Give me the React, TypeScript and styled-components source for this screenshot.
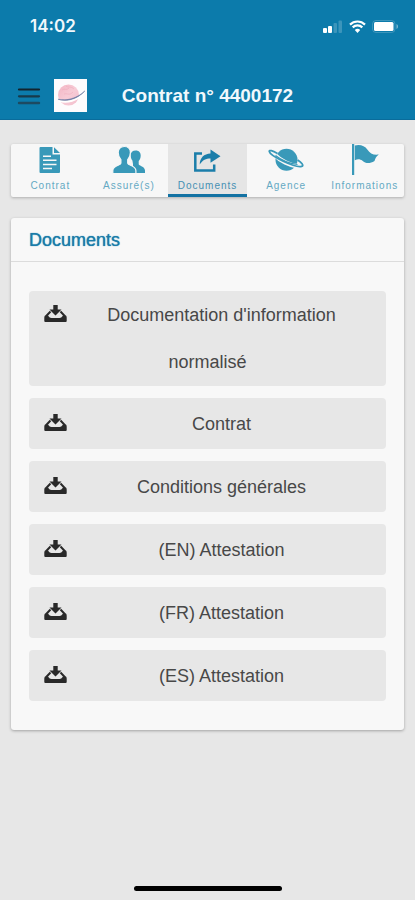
import React from "react";
import styled, { createGlobalStyle } from "styled-components";

const GlobalStyle = createGlobalStyle`
  *, *::before, *::after { box-sizing: border-box; }
  body {
    margin: 0;
    background: #e7e7e7;
    font-family: "Liberation Sans", Arial, sans-serif;
  }
  button { font: inherit; border: 0; cursor: pointer; }
  svg { display: block; flex-shrink: 0; }
`;

const Screen = styled.div`
  display: flex;
  flex-direction: column;
  min-height: 100vh;
`;

const Header = styled.header`
  background: #0c7bab;
  border-bottom: 1px solid #0a6c9b;
  color: #f1f8fc;
`;

const StatusBar = styled.div`
  display: flex;
  align-items: center;
  justify-content: space-between;
  height: 52px;
  padding: 0 16px 0 30px;
`;

const Clock = styled.time`
  font-family: Inter, sans-serif;
  font-size: 17px;
  font-weight: 600;
  line-height: 20px;
`;

const StatusIcons = styled.div`
  display: flex;
  align-items: center;
  gap: 6px;
`;

const TitleBar = styled.div`
  display: grid;
  grid-template-columns: 70px 1fr 70px;
  align-items: center;
  height: 67px;
  padding: 20px 17px 0;
`;

const Brand = styled.div`
  display: flex;
  align-items: center;
  gap: 13px;
`;

const MenuButton = styled.button`
  padding: 0;
  background: none;
`;

const Title = styled.h1`
  margin: 0;
  font-size: 19px;
  font-weight: 700;
  line-height: 24px;
  text-align: center;
  white-space: nowrap;
`;

const Main = styled.main`
  flex: 1;
  display: flex;
  flex-direction: column;
  gap: 21px;
  padding: 24px 11px;
`;

const Tabs = styled.nav`
  display: grid;
  grid-template-columns: repeat(5, 1fr);
  background: #f7f7f7;
  border-radius: 2px;
  box-shadow: 0 1px 3px rgba(0, 0, 0, 0.25);
`;

const Tab = styled.button<{ $active?: boolean }>`
  display: flex;
  flex-direction: column;
  align-items: center;
  min-width: 0;
  height: 53px;
  padding: 0;
  background: ${(p) => (p.$active ? "#e5e5e5" : "transparent")};
  border-bottom: 3px solid ${(p) => (p.$active ? "#1372a3" : "transparent")};
  color: ${(p) => (p.$active ? "#1b7eaa" : "#3999b9")};
`;

const TabLabel = styled.span<{ $active?: boolean }>`
  margin-top: 3px;
  font-size: 10px;
  line-height: 14px;
  letter-spacing: 1px;
  white-space: nowrap;
  color: ${(p) => (p.$active ? "#4590b3" : "#64a9c3")};
`;

const Card = styled.section`
  background: #f8f8f8;
  border-radius: 3px;
  box-shadow: 0 1px 3px rgba(0, 0, 0, 0.3);
`;

const CardTitle = styled.h2`
  margin: 0;
  padding: 11px 18px 10px;
  border-bottom: 1px solid #dcdcdc;
  color: #1a7ca9;
  font-size: 18px;
  font-weight: 400;
  line-height: 22px;
  text-shadow: 0 0 1px #1a7ca9;
`;

const DocumentList = styled.ul`
  display: flex;
  flex-direction: column;
  gap: 12px;
  margin: 0;
  padding: 29px 18px;
  list-style: none;
`;

const DocumentButton = styled.button`
  display: block;
  width: 100%;
  min-height: 51px;
  padding: 1px 15px 0;
  border-radius: 4px;
  background: #e7e7e7;
  color: #484848;
  font-size: 18px;
  line-height: 47px;
  text-align: center;

  svg {
    float: left;
    margin: 13px 5px 0 0;
  }
`;

const HomeIndicator = styled.div`
  align-self: center;
  width: 148px;
  height: 5px;
  margin-bottom: 9px;
  border-radius: 3px;
  background: #000;
`;

const SignalIcon = () => (
  <svg width="20" height="13" viewBox="0 0 20 13" fill="#fff" aria-hidden="true">
    <rect x="0" y="8" width="4" height="5" rx="1" />
    <rect x="5" y="6" width="4" height="7" rx="1" />
    <rect x="10.5" y="3" width="3.5" height="10" rx="1" opacity=".2" />
    <rect x="15.5" y="0.5" width="3.5" height="12.5" rx="1" opacity=".2" />
  </svg>
);

const WifiIcon = () => (
  <svg width="17" height="13" viewBox="0 0 17 13" aria-hidden="true">
    <g fill="none" stroke="#fff" strokeWidth="2.2">
      <path d="M1 4.6a10.6 10.6 0 0 1 15 0" />
      <path d="M3.7 7.4a6.8 6.8 0 0 1 9.6 0" />
    </g>
    <path d="M8.5 13 5.8 10.1a3.9 3.9 0 0 1 5.4 0z" fill="#fff" />
  </svg>
);

const BatteryIcon = () => (
  <svg width="27" height="13" viewBox="0 0 27 13" aria-hidden="true">
    <rect x=".5" y=".5" width="22.5" height="12" rx="3.5" fill="none" stroke="#fff" opacity=".2" />
    <rect x="2" y="2" width="19.5" height="9" rx="1.5" fill="#fff" />
    <path d="M24.5 4c2 .8 2 4.2 0 5z" fill="#fff" opacity=".45" />
  </svg>
);

const MenuIcon = () => (
  <svg width="24" height="18" viewBox="0 0 24 18" aria-hidden="true">
    <path d="M2 2.500h20" stroke="#12242e" strokeWidth="2.2" strokeLinecap="round" />
    <path d="M2 9.300h20" stroke="#173a4b" strokeWidth="2.2" strokeLinecap="round" />
    <path d="M2 16h20" stroke="#1d4a61" strokeWidth="2.4" strokeLinecap="round" />
  </svg>
);

const Logo = () => (
  <svg width="33" height="33" viewBox="0 0 33 33" role="img" aria-label="Logo">
    <defs>
      <linearGradient id="globe" x1="0" y1="0" x2="1" y2="1">
        <stop offset="0" stopColor="#f3b4c3" />
        <stop offset=".5" stopColor="#f7cbd6" />
        <stop offset="1" stopColor="#f3becd" />
      </linearGradient>
    </defs>
    <rect width="33" height="33" fill="#fdfbfd" />
    <circle cx="14.500" cy="16" r="10.500" fill="url(#globe)" />
    <path d="M8 11c3-2 4 1 7-2M10 15c4-1 5 2 9-2M12 7c2 2 5 0 8 3" fill="none" stroke="#eda5b8" strokeWidth="1" opacity=".5" />
    <path d="M5 21.500c8 2.500 18 0 25-7.500" fill="none" stroke="#fff" strokeWidth="2.400" />
    <path d="M4.200 20.300c8.300 1.700 18.500-.6 26.600-8.300-7.200 8.100-18.300 11.200-26.600 8.300z" fill="#5c6ea6" stroke="#6b789f" strokeWidth=".6" />
  </svg>
);

const ContractIcon = () => (
  <svg width="36" height="32" viewBox="0 1 36 32" fill="currentColor" aria-hidden="true">
    <path d="M8.500 4h12v7.500H28V29a1 1 0 0 1-1 1H8.500a1 1 0 0 1-1-1V5a1 1 0 0 1 1-1z" />
    <path d="M22 4.200 28 10h-6z" />
    <path d="M11 13.200h8M11 17.300h13.500M11 21.400h13.500M11 25.500h9" fill="none" stroke="#f7f7f7" strokeWidth="1.5" />
  </svg>
);

const PeopleIcon = () => (
  <svg width="36" height="32" viewBox="0 1 36 32" fill="currentColor" aria-hidden="true">
    <path d="M24.800 7.500c3.300 0 4.900 2.300 4.900 5 0 2.400-.8 4.400-2 5.600v3.100c0 1.400 6.300 2.200 6.300 6.300v2.500H22v-9l-.6-3.500c-1.100-1.200-1.700-3.200-1.700-5.200 0-3 1.800-4.800 5.100-4.800z" />
    <path d="M13.300 3.500c4.300 0 6.100 2.700 6.100 6.100 0 3-1.200 5.500-2.700 7v3.600c0 2.300 8.200 2.200 8.200 7.600v2.800H1.800v-2.800c0-5.400 8.100-5.300 8.100-7.600v-3.600c-1.500-1.500-2.700-4-2.700-7 0-3.400 1.800-6.100 6.100-6.100z" stroke="#f7f7f7" strokeWidth="1.200" />
  </svg>
);

const ShareIcon = () => (
  <svg width="36" height="32" viewBox="0 1 36 32" aria-hidden="true">
    <path d="M13 10.500H6.300v17h18.900v-6" fill="none" stroke="currentColor" strokeWidth="2.500" />
    <path d="M21.500 6.500 31.500 13.200l-10 6.600v-4.200c-4.600 0-7.800 1.500-10.800 6 .2-6.800 4.200-10.600 10.800-11z" fill="currentColor" />
  </svg>
);

const PlanetIcon = () => (
  <svg width="38" height="32" viewBox="0 1 38 32" aria-hidden="true">
    <circle cx="19.500" cy="16.800" r="11" fill="currentColor" />
    <path d="M8.500 12.500C13 17.500 23 22.600 31 23.400" fill="none" stroke="#f7f7f7" strokeWidth="4.600" />
    <path d="M10.500 10.500C5.500 7.700 1.900 6.500 2.300 8.700c.8 4.200 25.500 16.400 32.300 14.700 3-.8-.5-4.200-4-6.400" fill="none" stroke="currentColor" strokeWidth="1.800" />
    <path d="M8.500 12.500c5 4 14 8 22 9" fill="none" stroke="currentColor" strokeWidth="1.200" />
  </svg>
);

const FlagIcon = () => (
  <svg width="36" height="32" viewBox="0 1 36 32" fill="currentColor" aria-hidden="true">
    <rect x="5" y="1" width="2.200" height="31" />
    <path d="M7.800 2.500c5-1.500 10 .2 12.500 4 2.800 4.300 6 5.700 11.500 5.100-2.700 2-3.500 4-4.300 6.400-5.500 3.500-9.300 2.100-12-.3-2.400-1.600-4.500-2-7.700-.5z" />
  </svg>
);

const DownloadIcon = () => (
  <svg width="23" height="18" viewBox="0 0 23 18" aria-hidden="true">
    <path d="M9.300 0h4.400v4.500h3.800l-6 6-6-6h3.800z" fill="#292929" />
    <path d="M6.500 6.500 1.800 11.500M16.500 6.500l4.700 5" fill="none" stroke="#292929" strokeWidth="2" />
    <path d="M.800 10.800 4 10.600c1.600 1.900 2 2.400 3.400 2.400h8.200c1.400 0 1.800-.5 3.400-2.400l3.200.2c.4.600.5 1.200.5 2V16a1 1 0 0 1-1 1H1.300a1 1 0 0 1-1-1v-3.200c0-.8.100-1.400.5-2z" fill="#292929" />
  </svg>
);

const tabs = [
  { label: "Contrat", Icon: ContractIcon },
  { label: "Assuré(s)", Icon: PeopleIcon },
  { label: "Documents", Icon: ShareIcon, active: true },
  { label: "Agence", Icon: PlanetIcon },
  { label: "Informations", Icon: FlagIcon },
];

const documents = [
  "Documentation d'information normalisé",
  "Contrat",
  "Conditions générales",
  "(EN) Attestation",
  "(FR) Attestation",
  "(ES) Attestation",
];

export default function App() {
  return (
    <Screen>
      <GlobalStyle />
      <Header>
        <StatusBar>
          <Clock>14:02</Clock>
          <StatusIcons>
            <SignalIcon />
            <WifiIcon />
            <BatteryIcon />
          </StatusIcons>
        </StatusBar>
        <TitleBar>
          <Brand>
            <MenuButton aria-label="Menu">
              <MenuIcon />
            </MenuButton>
            <Logo />
          </Brand>
          <Title>Contrat n° 4400172</Title>
        </TitleBar>
      </Header>
      <Main>
        <Tabs>
          {tabs.map(({ label, Icon, active }) => (
            <Tab key={label} $active={active} aria-current={active ? "page" : undefined}>
              <Icon />
              <TabLabel $active={active}>{label}</TabLabel>
            </Tab>
          ))}
        </Tabs>
        <Card>
          <CardTitle>Documents</CardTitle>
          <DocumentList>
            {documents.map((name) => (
              <li key={name}>
                <DocumentButton>
                  <DownloadIcon />
                  {name}
                </DocumentButton>
              </li>
            ))}
          </DocumentList>
        </Card>
      </Main>
      <HomeIndicator />
    </Screen>
  );
}
